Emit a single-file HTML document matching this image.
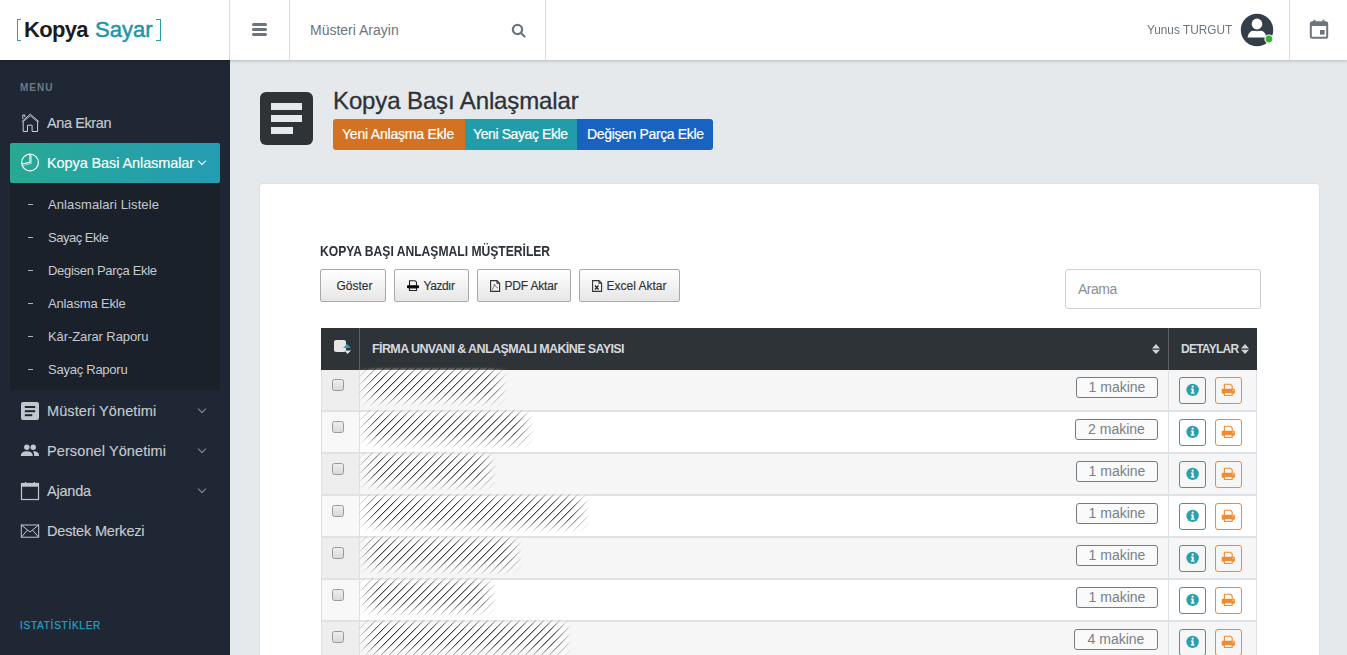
<!DOCTYPE html>
<html><head><meta charset="utf-8">
<style>
*{box-sizing:border-box;margin:0;padding:0}
html,body{width:1347px;height:655px;overflow:hidden;font-family:"Liberation Sans",sans-serif;background:#e5e9ec}
.a{position:absolute;white-space:nowrap;line-height:1}
.th{-webkit-text-stroke:0.25px currentColor}
#hdr{position:absolute;left:0;top:0;width:1347px;height:60px;background:#fff;box-shadow:0 1px 3px rgba(0,0,0,.2);z-index:5}
#side{position:absolute;left:0;top:60px;width:230px;height:595px;background:#1e2733}
.vl{position:absolute;top:0;width:1px;height:60px;background:#dadada}
.mi{-webkit-text-stroke:0.15px currentColor;position:absolute;left:47px;font-size:14.5px;letter-spacing:0.1px;color:#c6cad0;white-space:nowrap;line-height:1}
.sub{position:absolute;left:48px;font-size:13px;letter-spacing:0.1px;color:#c6cad0;white-space:nowrap;line-height:1}
.dash{position:absolute;left:28px;width:5px;height:1px;background:#aeb3ba}
.chev{position:absolute;left:199px;margin-top:1px;width:6px;height:6px;border-right:1.3px solid #8a919b;border-bottom:1.3px solid #8a919b;transform:rotate(45deg)}
#card{position:absolute;left:260px;top:184px;width:1059px;height:480px;background:#fff;border-radius:3px;box-shadow:0 0 2px rgba(0,0,0,.12)}
.btn{-webkit-text-stroke:0.15px #333;position:absolute;top:269px;height:33px;border:1px solid #a9a9a9;border-radius:2px;background:linear-gradient(#fff,#e6e6e6);font-size:12px;color:#333;line-height:33px;text-align:center;white-space:nowrap}
.tb{position:absolute;left:321px;width:937px}
.row{position:absolute;left:321px;width:936px;height:42px;border-left:1px solid #dde1e5;border-right:1px solid #dde1e5;border-bottom:2px solid #dfe3e7}
.c1{position:absolute;left:0;top:0;width:37px;height:40px}
.c1d{position:absolute;left:37px;top:0;width:1px;height:40px;background:#dde1e5}
.c3d{position:absolute;left:846px;top:0;width:1px;height:40px;background:#dde1e5}
.chk{position:absolute;left:10px;top:9px;width:12px;height:12px;border:1px solid #9a9a9a;border-radius:2.5px;background:linear-gradient(#eeeeee,#d9d9d9)}
.badge{position:absolute;height:21px;border:1px solid #737b83;border-radius:3px;font-size:14px;color:#78808a;background:#fafafa;line-height:19px;text-align:center;white-space:nowrap}
.ib{position:absolute;left:857px;top:7px;width:27px;height:27px;border:1px solid #2a9fb1;border-radius:3px}
.pb{position:absolute;left:893px;top:7px;width:27px;height:27px;border:1px solid #f28a2e;border-radius:3px}
.hatch{position:absolute;left:36px;top:-3px;height:44px;
 background:repeating-linear-gradient(-45deg,#fff 0px,#fff 4.0px,#333 4.55px,#333 4.85px,#fff 5.5px,#fff 5.66px);
 -webkit-mask-image:linear-gradient(180deg,transparent 0px,rgba(0,0,0,.6) 5px,#000 11px,#000 25px,rgba(0,0,0,.5) 32px,transparent 40px),linear-gradient(90deg,transparent 0px,#000 20px,#000 calc(100% - 20px),transparent 100%);
 -webkit-mask-composite:source-in;mask-composite:intersect}
</style></head><body>
<div id="hdr">
  <div class="vl" style="left:229px"></div>
  <div class="vl" style="left:289px"></div>
  <div class="vl" style="left:545px"></div>
  <div class="vl" style="left:1289px"></div>
  <!-- logo -->
  <div class="a" style="left:17px;top:19px;width:4px;height:22px;border:1.3px solid #2ea59a;border-right:none"></div>
  <div class="a" style="left:24px;top:19px;font-size:22px;font-weight:bold;color:#1c1c1c;letter-spacing:-0.7px">Kopya</div>
  <div class="a" style="left:95px;top:19px;font-size:22px;color:#2196a8;letter-spacing:0px;-webkit-text-stroke:0.5px #2196a8">Sayar</div>
  <div class="a" style="left:156px;top:19px;width:5px;height:22px;border:1.3px solid #2aa0a6;border-left:none"></div>
  <!-- hamburger -->
  <div class="a" style="left:252px;top:23px;width:15px;height:3px;border-radius:2px;background:#6c757d"></div>
  <div class="a" style="left:252px;top:28px;width:15px;height:3px;border-radius:2px;background:#6c757d"></div>
  <div class="a" style="left:252px;top:33px;width:15px;height:3px;border-radius:2px;background:#6c757d"></div>
  <div class="a" style="left:310px;top:23px;font-size:14px;color:#6c757d">Müsteri Arayin</div>
  <svg class="a" style="left:510px;top:22px" width="18" height="18" viewBox="0 0 18 18"><circle cx="7.5" cy="7.5" r="4.6" fill="none" stroke="#6c757d" stroke-width="2.3"/><line x1="11" y1="11" x2="14.5" y2="14.5" stroke="#6c757d" stroke-width="2.2" stroke-linecap="round"/></svg>
  <div class="a" style="left:1147px;top:23px;font-size:13.5px;color:#6c757d;transform:scaleX(0.875);transform-origin:0 0">Yunus TURGUT</div>
  <svg class="a" style="left:1240px;top:13px" width="36" height="36" viewBox="0 0 36 36">
    <circle cx="17" cy="17" r="16.2" fill="#333e48"/>
    <circle cx="17" cy="10.9" r="5.3" fill="#fff"/>
    <path d="M7.5 24.5 Q8.5 16.8 17 16.8 Q25.5 16.8 26.5 24.5 Z" fill="#fff"/>
    <path d="M11 16.9 Q17 18.6 23 16.9" fill="none" stroke="#333e48" stroke-width="1"/>
    <circle cx="29" cy="26" r="4.6" fill="#fff"/>
    <circle cx="29" cy="26" r="3.4" fill="#2eb82e"/>
  </svg>
  <svg class="a" style="left:1309px;top:19px" width="21" height="21" viewBox="0 0 21 21">
    <rect x="1.8" y="3.2" width="16.4" height="15.6" rx="1.5" fill="none" stroke="#6c757d" stroke-width="2"/>
    <rect x="1.8" y="3.2" width="16.4" height="3.8" fill="#6c757d"/>
    <rect x="4.5" y="0.8" width="2" height="3" fill="#6c757d"/>
    <rect x="13.5" y="0.8" width="2" height="3" fill="#6c757d"/>
    <rect x="11" y="11" width="4.6" height="4.6" fill="#6c757d"/>
  </svg>
</div>

<div id="side">
  <div class="a" style="left:20px;top:23px;font-size:10px;font-weight:bold;color:#707886;letter-spacing:1.0px">MENU</div>
  <!-- Ana Ekran -->
  <svg class="a" style="left:20px;top:52px" width="20" height="20" viewBox="0 0 20 20"><path d="M1.8 9.6 L10.3 2.2 L18.8 9.6" fill="none" stroke="#ccd0d6" stroke-width="1"/><path d="M3.3 9.6 L10.3 3.8 L17.3 9.6" fill="none" stroke="#ccd0d6" stroke-width="0.8"/><path d="M3.2 9.2 V19.5 H7.5 V13.2 H12.1 V19.5 H17.6 V9.2 M2.8 6.8 V3 H4.8 V5" fill="none" stroke="#ccd0d6" stroke-width="1"/></svg>
  <div class="mi" style="top:56px;letter-spacing:-0.4px">Ana Ekran</div>
  <!-- active -->
  <div class="a" style="left:10px;top:83px;width:210px;height:40px;border-radius:2px;background:linear-gradient(90deg,#27a994,#249cb3)"></div>
  <svg class="a" style="left:20px;top:92px" width="20" height="20" viewBox="0 0 20 20"><circle cx="10" cy="10.5" r="8.4" fill="none" stroke="#fff" stroke-width="1.2"/><path d="M10 2.2 V10.3 L2.2 12" fill="none" stroke="#fff" stroke-width="1.2"/><path d="M11.3 2.8 V11.6 L3 13.4" fill="none" stroke="rgba(255,255,255,.55)" stroke-width="1"/></svg>
  <div class="mi" style="top:96px;color:#fff;font-size:14.5px;letter-spacing:-0.1px">Kopya Basi Anlasmalar</div>
  <div class="chev" style="top:97px;border-color:#fff"></div>
  <!-- submenu -->
  <div class="a" style="left:10px;top:123px;width:210px;height:207px;background:#1b212b;border-radius:0 0 2px 2px"></div>
  <div class="dash" style="top:144px"></div><div class="sub" style="top:138px">Anlasmalari Listele</div>
  <div class="dash" style="top:177px"></div><div class="sub" style="top:171px;letter-spacing:-0.48px">Sayaç Ekle</div>
  <div class="dash" style="top:210px"></div><div class="sub" style="top:204px;letter-spacing:-0.3px">Degisen Parça Ekle</div>
  <div class="dash" style="top:243px"></div><div class="sub" style="top:237px;letter-spacing:-0.15px">Anlasma Ekle</div>
  <div class="dash" style="top:276px"></div><div class="sub" style="top:270px;letter-spacing:-0.09px">Kâr-Zarar Raporu</div>
  <div class="dash" style="top:309px"></div><div class="sub" style="top:303px;letter-spacing:-0.25px">Sayaç Raporu</div>
  <!-- Musteri -->
  <svg class="a" style="left:21px;top:342px" width="18" height="18" viewBox="0 0 18 18"><rect x="0" y="0" width="18" height="18" rx="2" fill="#c2c7ce"/><rect x="3.8" y="4" width="10.4" height="2" fill="#1e2733"/><rect x="3.8" y="8.2" width="10.4" height="2" fill="#1e2733"/><rect x="3.8" y="12.2" width="7.4" height="2" fill="#1e2733"/></svg>
  <div class="mi" style="top:344px">Müsteri Yönetimi</div>
  <div class="chev" style="top:345px"></div>
  <!-- Personel -->
  <svg class="a" style="left:20px;top:382px" width="20" height="16" viewBox="0 0 20 16"><circle cx="6.8" cy="5.2" r="2.7" fill="#c2c7ce"/><circle cx="13.2" cy="5.2" r="2.7" fill="#c2c7ce"/><path d="M0.8 13.8 Q0.8 9.3 6.8 9.3 Q12.6 9.3 12.8 13.8 V14 H0.8Z" fill="#c2c7ce"/><path d="M14 9.3 Q19 9.5 19 13.5 V14 H14.2 V13.5 Q14.2 11 13 9.4Z" fill="#c2c7ce"/></svg>
  <div class="mi" style="top:384px">Personel Yönetimi</div>
  <div class="chev" style="top:384.5px"></div>
  <!-- Ajanda -->
  <svg class="a" style="left:20px;top:421px" width="20" height="20" viewBox="0 0 20 20"><rect x="1.5" y="2.5" width="17" height="16" fill="none" stroke="#c2c7ce" stroke-width="1.2"/><rect x="1.5" y="2.5" width="17" height="3.2" fill="#c2c7ce"/><rect x="5" y="1" width="1.2" height="2" fill="#c2c7ce"/><rect x="13.8" y="1" width="1.2" height="2" fill="#c2c7ce"/></svg>
  <div class="mi" style="top:424px;letter-spacing:-0.2px">Ajanda</div>
  <div class="chev" style="top:424.5px"></div>
  <!-- Destek -->
  <svg class="a" style="left:20px;top:463px" width="20" height="16" viewBox="0 0 20 16"><rect x="1.3" y="2" width="17.4" height="12.2" fill="none" stroke="#c2c7ce" stroke-width="1"/><path d="M1.3 2 L10 9 L18.7 2 M1.3 14.2 L7.5 7 M18.7 14.2 L12.5 7" fill="none" stroke="#c2c7ce" stroke-width="1"/></svg>
  <div class="mi" style="top:464px;letter-spacing:-0.18px">Destek Merkezi</div>
  <div class="a" style="left:20px;top:561px;font-size:10px;color:#2a9fc0;letter-spacing:0.75px;-webkit-text-stroke:0.25px #2a9fc0">ISTATİSTİKLER</div>
</div>

<!-- page title -->
<div class="a" style="left:260px;top:92px;width:53px;height:53px;border-radius:6px;background:#2e3338"></div>
<div class="a" style="left:271px;top:103px;width:31px;height:7px;background:#e5e9ec"></div>
<div class="a" style="left:271px;top:115px;width:31px;height:7px;background:#e5e9ec"></div>
<div class="a" style="left:271px;top:127px;width:22px;height:7px;background:#e5e9ec"></div>
<div class="a" style="left:333px;top:89px;font-size:24px;letter-spacing:-0.12px;color:#2d3238;-webkit-text-stroke:0.3px #2d3238">Kopya Başı Anlaşmalar</div>
<div class="a" style="left:333px;top:119px;width:132px;height:31px;background:#d37222;border-radius:3px 0 0 3px"></div>
<div class="a" style="left:465px;top:119px;width:112px;height:31px;background:#239ca9"></div>
<div class="a" style="left:577px;top:119px;width:136px;height:31px;background:#1862c1;border-radius:0 3px 3px 0"></div>
<div class="a" style="left:342px;top:127px;font-size:14px;color:#fff;letter-spacing:-0.2px;-webkit-text-stroke:0.2px #fff">Yeni Anlaşma Ekle</div>
<div class="a" style="left:473px;top:127px;font-size:14px;color:#fff;letter-spacing:-0.4px;-webkit-text-stroke:0.2px #fff">Yeni Sayaç Ekle</div>
<div class="a" style="left:587px;top:127px;font-size:14px;color:#fff;letter-spacing:-0.35px;-webkit-text-stroke:0.2px #fff">Değişen Parça Ekle</div>

<div id="card"></div>
<div class="a" style="left:320px;top:244px;font-size:14px;font-weight:bold;color:#2d3238;letter-spacing:0px;transform:scaleX(0.865);transform-origin:0 0">KOPYA BAŞI ANLAŞMALI MÜŞTERİLER</div>
<div class="btn" style="left:320px;width:66px;padding-left:3px">Göster</div>
<div class="btn" style="left:394px;width:75px"><span style="display:inline-block;width:15px"></span><span style="letter-spacing:-0.5px">Yazdır</span></div>
<svg class="a" style="left:407px;top:280px" width="12" height="11" viewBox="0 0 12 11"><path d="M2.5 5.5 V0.7 H8 L9.5 2.2 V5.5" fill="none" stroke="#222" stroke-width="1.1"/><rect x="0" y="5.2" width="12" height="3" rx="1" fill="#000"/><rect x="2.5" y="8" width="7" height="2.5" fill="#fff" stroke="#222" stroke-width="1.1"/></svg>
<div class="btn" style="left:477px;width:94px"><span style="display:inline-block;width:14px"></span><span style="letter-spacing:-0.2px">PDF Aktar</span></div>
<svg class="a" style="left:490px;top:280px" width="11" height="12" viewBox="0 0 11 12"><path d="M0.6 0.6 H7 L9.6 3.2 V11.4 H0.6 Z M7 0.6 V3.2 H9.6" fill="none" stroke="#333" stroke-width="1.1"/><path d="M2 10 Q4 7 4.5 4 Q5 7 8 8" fill="none" stroke="#555" stroke-width="0.7"/></svg>
<div class="btn" style="left:579px;width:101px"><span style="display:inline-block;width:14px"></span>Excel Aktar</div>
<svg class="a" style="left:592px;top:280px" width="11" height="12" viewBox="0 0 11 12"><path d="M0.6 0.6 H7 L9.6 3.2 V11.4 H0.6 Z M7 0.6 V3.2 H9.6" fill="none" stroke="#333" stroke-width="1.1"/><path d="M3 5.5 L6.5 9.5 M6.5 5.5 L3 9.5" fill="none" stroke="#222" stroke-width="1.2"/></svg>
<div class="a" style="left:1065px;top:269px;width:196px;height:40px;border:1px solid #cfcfcf;border-radius:3px;background:#fff"></div>
<div class="a" style="left:1078px;top:282px;font-size:14px;letter-spacing:-0.5px;color:#8a8f95">Arama</div>

<!-- table header -->
<div class="a" style="left:321px;top:328px;width:936px;height:42px;background:#2e3338"></div>
<div class="a" style="left:359px;top:328px;width:1px;height:42px;background:#5a6066"></div>
<div class="a" style="left:1168px;top:328px;width:1px;height:42px;background:#5a6066"></div>
<div class="a" style="left:372px;top:343px;font-size:12.5px;font-weight:bold;color:#d6d9de;letter-spacing:-0.6px">FİRMA UNVANI &amp; ANLAŞMALI MAKİNE SAYISI</div>
<div class="a" style="left:334px;top:340px;width:12px;height:12px;border-radius:2px;background:#e6e6e6"></div>
<svg class="a" style="left:343px;top:343px" width="9" height="11" viewBox="0 0 9 11"><path d="M0 5 L4 1 L8 5Z" fill="#2aa3b8"/><path d="M1.5 7.5 H8 L4.5 11Z" fill="#dfe1e4"/></svg>
<svg class="a" style="left:1152px;top:344px" width="8" height="10" viewBox="0 0 8 10"><path d="M0 4.5 L4 0 L8 4.5Z M0 5.7 H8 L4 10Z" fill="#d2d5d8"/></svg>
<svg class="a" style="left:1241px;top:344px" width="8" height="10" viewBox="0 0 8 10"><path d="M0 4.5 L4 0 L8 4.5Z M0 5.7 H8 L4 10Z" fill="#d2d5d8"/></svg>
<div class="a" style="left:1181px;top:343px;font-size:12px;font-weight:bold;color:#d6d9de;letter-spacing:-0.75px">DETAYLAR</div>

<!--ROWS-->
<div class="row" style="top:370px;background:#f6f6f6">
 <div class="c1" style="background:#eeeeee"></div><div class="c1d"></div><div class="c3d"></div>
 <div class="chk"></div>
 <div class="hatch" style="width:150px"></div>
 <div class="badge" style="left:754px;top:7px;width:82px">1 makine</div>
 <div class="ib"><svg width="25" height="25" viewBox="0 0 25 25" style="position:absolute;left:0;top:0"><circle cx="12.6" cy="11.9" r="6.2" fill="#2a9fb1"/><rect x="11.7" y="10.6" width="2" height="4.2" fill="#fff"/><rect x="10.9" y="14.4" width="3.6" height="1.3" fill="#fff"/><rect x="10.9" y="10.6" width="2" height="1" fill="#fff"/><circle cx="12.7" cy="8.6" r="1.15" fill="#fff"/></svg></div>
 <div class="pb"><svg width="25" height="25" viewBox="0 0 25 25" style="position:absolute;left:0;top:0"><path d="M8.4 11 V6.3 H14.6 L16.2 7.9 V11" fill="none" stroke="#f28a2e" stroke-width="1.1"/><rect x="5.7" y="10.8" width="13.2" height="4.9" rx="1" fill="#f28a2e"/><circle cx="17" cy="12.2" r="0.6" fill="#fff"/><rect x="8.4" y="14.7" width="7.8" height="2.7" fill="#fff" stroke="#f28a2e" stroke-width="1.1"/></svg></div>
</div>
<div class="row" style="top:412px;background:#ffffff">
 <div class="c1" style="background:#f8f8f8"></div><div class="c1d"></div><div class="c3d"></div>
 <div class="chk"></div>
 <div class="hatch" style="width:176px"></div>
 <div class="badge" style="left:753px;top:7px;width:83px">2 makine</div>
 <div class="ib"><svg width="25" height="25" viewBox="0 0 25 25" style="position:absolute;left:0;top:0"><circle cx="12.6" cy="11.9" r="6.2" fill="#2a9fb1"/><rect x="11.7" y="10.6" width="2" height="4.2" fill="#fff"/><rect x="10.9" y="14.4" width="3.6" height="1.3" fill="#fff"/><rect x="10.9" y="10.6" width="2" height="1" fill="#fff"/><circle cx="12.7" cy="8.6" r="1.15" fill="#fff"/></svg></div>
 <div class="pb"><svg width="25" height="25" viewBox="0 0 25 25" style="position:absolute;left:0;top:0"><path d="M8.4 11 V6.3 H14.6 L16.2 7.9 V11" fill="none" stroke="#f28a2e" stroke-width="1.1"/><rect x="5.7" y="10.8" width="13.2" height="4.9" rx="1" fill="#f28a2e"/><circle cx="17" cy="12.2" r="0.6" fill="#fff"/><rect x="8.4" y="14.7" width="7.8" height="2.7" fill="#fff" stroke="#f28a2e" stroke-width="1.1"/></svg></div>
</div>
<div class="row" style="top:454px;background:#f6f6f6">
 <div class="c1" style="background:#eeeeee"></div><div class="c1d"></div><div class="c3d"></div>
 <div class="chk"></div>
 <div class="hatch" style="width:139px"></div>
 <div class="badge" style="left:754px;top:7px;width:82px">1 makine</div>
 <div class="ib"><svg width="25" height="25" viewBox="0 0 25 25" style="position:absolute;left:0;top:0"><circle cx="12.6" cy="11.9" r="6.2" fill="#2a9fb1"/><rect x="11.7" y="10.6" width="2" height="4.2" fill="#fff"/><rect x="10.9" y="14.4" width="3.6" height="1.3" fill="#fff"/><rect x="10.9" y="10.6" width="2" height="1" fill="#fff"/><circle cx="12.7" cy="8.6" r="1.15" fill="#fff"/></svg></div>
 <div class="pb"><svg width="25" height="25" viewBox="0 0 25 25" style="position:absolute;left:0;top:0"><path d="M8.4 11 V6.3 H14.6 L16.2 7.9 V11" fill="none" stroke="#f28a2e" stroke-width="1.1"/><rect x="5.7" y="10.8" width="13.2" height="4.9" rx="1" fill="#f28a2e"/><circle cx="17" cy="12.2" r="0.6" fill="#fff"/><rect x="8.4" y="14.7" width="7.8" height="2.7" fill="#fff" stroke="#f28a2e" stroke-width="1.1"/></svg></div>
</div>
<div class="row" style="top:496px;background:#ffffff">
 <div class="c1" style="background:#f8f8f8"></div><div class="c1d"></div><div class="c3d"></div>
 <div class="chk"></div>
 <div class="hatch" style="width:232px"></div>
 <div class="badge" style="left:754px;top:7px;width:82px">1 makine</div>
 <div class="ib"><svg width="25" height="25" viewBox="0 0 25 25" style="position:absolute;left:0;top:0"><circle cx="12.6" cy="11.9" r="6.2" fill="#2a9fb1"/><rect x="11.7" y="10.6" width="2" height="4.2" fill="#fff"/><rect x="10.9" y="14.4" width="3.6" height="1.3" fill="#fff"/><rect x="10.9" y="10.6" width="2" height="1" fill="#fff"/><circle cx="12.7" cy="8.6" r="1.15" fill="#fff"/></svg></div>
 <div class="pb"><svg width="25" height="25" viewBox="0 0 25 25" style="position:absolute;left:0;top:0"><path d="M8.4 11 V6.3 H14.6 L16.2 7.9 V11" fill="none" stroke="#f28a2e" stroke-width="1.1"/><rect x="5.7" y="10.8" width="13.2" height="4.9" rx="1" fill="#f28a2e"/><circle cx="17" cy="12.2" r="0.6" fill="#fff"/><rect x="8.4" y="14.7" width="7.8" height="2.7" fill="#fff" stroke="#f28a2e" stroke-width="1.1"/></svg></div>
</div>
<div class="row" style="top:538px;background:#f6f6f6">
 <div class="c1" style="background:#eeeeee"></div><div class="c1d"></div><div class="c3d"></div>
 <div class="chk"></div>
 <div class="hatch" style="width:165px"></div>
 <div class="badge" style="left:754px;top:7px;width:82px">1 makine</div>
 <div class="ib"><svg width="25" height="25" viewBox="0 0 25 25" style="position:absolute;left:0;top:0"><circle cx="12.6" cy="11.9" r="6.2" fill="#2a9fb1"/><rect x="11.7" y="10.6" width="2" height="4.2" fill="#fff"/><rect x="10.9" y="14.4" width="3.6" height="1.3" fill="#fff"/><rect x="10.9" y="10.6" width="2" height="1" fill="#fff"/><circle cx="12.7" cy="8.6" r="1.15" fill="#fff"/></svg></div>
 <div class="pb"><svg width="25" height="25" viewBox="0 0 25 25" style="position:absolute;left:0;top:0"><path d="M8.4 11 V6.3 H14.6 L16.2 7.9 V11" fill="none" stroke="#f28a2e" stroke-width="1.1"/><rect x="5.7" y="10.8" width="13.2" height="4.9" rx="1" fill="#f28a2e"/><circle cx="17" cy="12.2" r="0.6" fill="#fff"/><rect x="8.4" y="14.7" width="7.8" height="2.7" fill="#fff" stroke="#f28a2e" stroke-width="1.1"/></svg></div>
</div>
<div class="row" style="top:580px;background:#ffffff">
 <div class="c1" style="background:#f8f8f8"></div><div class="c1d"></div><div class="c3d"></div>
 <div class="chk"></div>
 <div class="hatch" style="width:139px"></div>
 <div class="badge" style="left:754px;top:7px;width:82px">1 makine</div>
 <div class="ib"><svg width="25" height="25" viewBox="0 0 25 25" style="position:absolute;left:0;top:0"><circle cx="12.6" cy="11.9" r="6.2" fill="#2a9fb1"/><rect x="11.7" y="10.6" width="2" height="4.2" fill="#fff"/><rect x="10.9" y="14.4" width="3.6" height="1.3" fill="#fff"/><rect x="10.9" y="10.6" width="2" height="1" fill="#fff"/><circle cx="12.7" cy="8.6" r="1.15" fill="#fff"/></svg></div>
 <div class="pb"><svg width="25" height="25" viewBox="0 0 25 25" style="position:absolute;left:0;top:0"><path d="M8.4 11 V6.3 H14.6 L16.2 7.9 V11" fill="none" stroke="#f28a2e" stroke-width="1.1"/><rect x="5.7" y="10.8" width="13.2" height="4.9" rx="1" fill="#f28a2e"/><circle cx="17" cy="12.2" r="0.6" fill="#fff"/><rect x="8.4" y="14.7" width="7.8" height="2.7" fill="#fff" stroke="#f28a2e" stroke-width="1.1"/></svg></div>
</div>
<div class="row" style="top:622px;background:#f6f6f6">
 <div class="c1" style="background:#eeeeee"></div><div class="c1d"></div><div class="c3d"></div>
 <div class="chk"></div>
 <div class="hatch" style="width:214px"></div>
 <div class="badge" style="left:752px;top:7px;width:84px">4 makine</div>
 <div class="ib"><svg width="25" height="25" viewBox="0 0 25 25" style="position:absolute;left:0;top:0"><circle cx="12.6" cy="11.9" r="6.2" fill="#2a9fb1"/><rect x="11.7" y="10.6" width="2" height="4.2" fill="#fff"/><rect x="10.9" y="14.4" width="3.6" height="1.3" fill="#fff"/><rect x="10.9" y="10.6" width="2" height="1" fill="#fff"/><circle cx="12.7" cy="8.6" r="1.15" fill="#fff"/></svg></div>
 <div class="pb"><svg width="25" height="25" viewBox="0 0 25 25" style="position:absolute;left:0;top:0"><path d="M8.4 11 V6.3 H14.6 L16.2 7.9 V11" fill="none" stroke="#f28a2e" stroke-width="1.1"/><rect x="5.7" y="10.8" width="13.2" height="4.9" rx="1" fill="#f28a2e"/><circle cx="17" cy="12.2" r="0.6" fill="#fff"/><rect x="8.4" y="14.7" width="7.8" height="2.7" fill="#fff" stroke="#f28a2e" stroke-width="1.1"/></svg></div>
</div>
<!--/ROWS-->
</body></html>
